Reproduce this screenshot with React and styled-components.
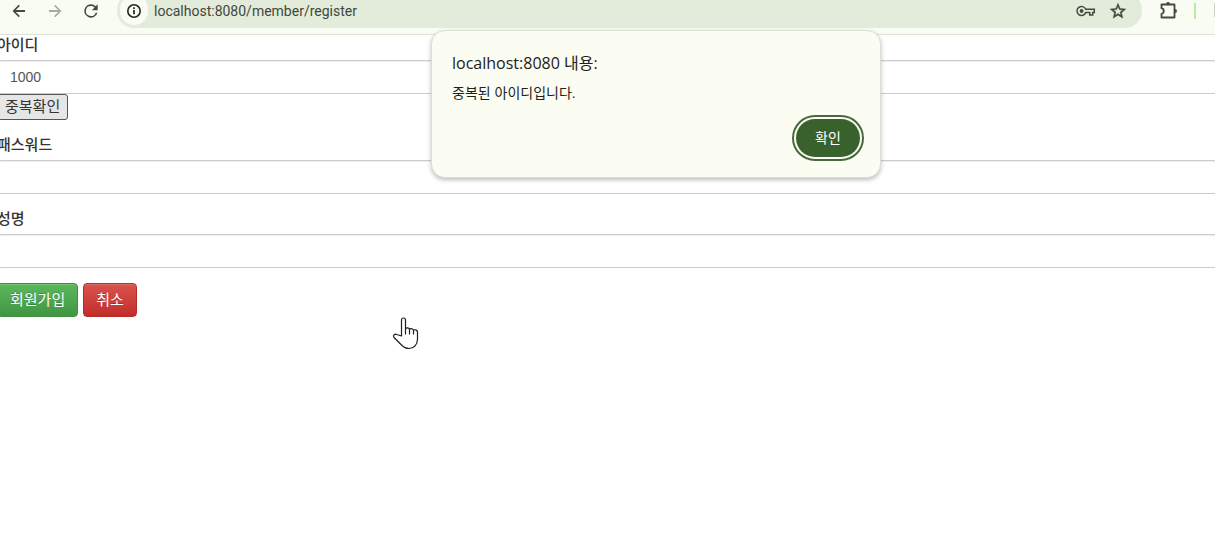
import React from 'react';
import styled, { createGlobalStyle, css } from 'styled-components';

const GlobalStyle = createGlobalStyle`
  * {
    box-sizing: border-box;
  }
  body {
    margin: 0;
    background: #fff;
    color: #333;
    font-family: "Liberation Sans", "Noto Sans CJK KR", sans-serif;
    font-size: 15px;
    line-height: 20px;
  }
`;

const Page = styled.div`
  position: relative;
  min-height: 100vh;
  overflow: hidden;
`;

const Toolbar = styled.header`
  display: flex;
  align-items: flex-start;
  height: 35px;
  padding-left: 8px;
  background: #f8fcf2;
  border-bottom: 1px solid #dde1d8;
`;

const IconButton = styled.button`
  display: flex;
  flex: none;
  align-items: center;
  justify-content: center;
  width: ${({ $width }) => $width || 36}px;
  height: 22px;
  padding: 0;
  border: 0;
  background: none;
  color: ${({ $muted }) => ($muted ? '#a7aca2' : '#42493f')};
`;

const AddressBar = styled.div`
  display: flex;
  flex: 1;
  align-items: flex-start;
  height: 28px;
  margin-left: 15px;
  padding: 0 8px 0 3px;
  background: #e3ecda;
  border-radius: 4px 4px 17px 17px / 11px 11px 17px 17px;
`;

const SiteInfo = styled.button`
  display: flex;
  align-items: center;
  justify-content: center;
  width: 28px;
  height: 25px;
  padding: 0 0 3px;
  border: 0;
  border-radius: 4px 4px 14px 14px / 11px 11px 14px 14px;
  background: #f8fcf2;
  color: #22271f;
`;

const Url = styled.input`
  flex: 1;
  min-width: 0;
  height: 22px;
  padding: 0 6px;
  border: 0;
  outline: 0;
  background: none;
  color: #41473c;
  font: 14px Roboto, "Noto Sans CJK KR", sans-serif;
`;

const Divider = styled.span`
  width: 2px;
  height: 16px;
  margin: 3px 18px 0 0;
  background: #bdeaa5;
`;

const Avatar = styled.span`
  width: 1px;
  height: 14px;
  margin-top: 3px;
  background: #cfd3ca;
`;

const Form = styled.form`
  margin: 0 -3px;
`;

const Group = styled.div`
  margin-bottom: 15px;
`;

const Label = styled.label`
  display: block;
  margin-bottom: 5px;
  font-weight: 500;
`;

const Field = styled.input`
  display: block;
  width: 100%;
  height: 34px;
  padding: 6px 12px;
  border: 1px solid #ccc;
  border-radius: 4px;
  outline: 0;
  background: #fff;
  box-shadow: inset 0 1px 1px rgba(0, 0, 0, 0.075);
  color: #555;
  font: inherit;
  font-size: 14px;
`;

const CheckButton = styled.button`
  display: block;
  height: 26px;
  padding: 0 7px;
  border: 1px solid #555;
  border-radius: 3px;
  background: #e6e6e6;
  color: #333;
  font: inherit;
`;

const Actions = styled.div`
  display: flex;
  gap: 5px;
`;

const tones = {
  success: css`
    border-color: #3e8f3e;
    background: linear-gradient(#5cb85c, #419641);
  `,
  danger: css`
    border-color: #b92c28;
    background: linear-gradient(#d9534f, #c12e2a);
  `,
};

const Button = styled.button`
  height: 34px;
  padding: 0 12px;
  border: 1px solid;
  border-radius: 4px;
  box-shadow: inset 0 1px 0 rgba(255, 255, 255, 0.15);
  color: #fff;
  font: inherit;
  text-shadow: 0 -1px 0 rgba(0, 0, 0, 0.2);
  ${({ $tone }) => tones[$tone]}
`;

const Dialog = styled.section`
  position: absolute;
  top: 30px;
  left: 431px;
  display: flex;
  flex-direction: column;
  width: 450px;
  padding: 20px;
  border: 1px solid #dcdfd4;
  border-radius: 14px;
  background: #fbfdf2;
  box-shadow: 0 2px 4px rgba(0, 0, 0, 0.25);
  color: #1d211a;
`;

const DialogTitle = styled.h1`
  margin: 0 0 8px;
  font: 16px/24px "Open Sans", "Noto Sans CJK KR", sans-serif;
`;

const DialogText = styled.p`
  margin: 0 0 16px;
  font-size: 14px;
  line-height: 20px;
`;

const Confirm = styled.button`
  align-self: flex-end;
  width: 64px;
  height: 38px;
  padding: 0 0 2px;
  border: 0;
  border-radius: 19px;
  outline: 2px solid #48693f;
  outline-offset: 2px;
  background: #38612b;
  color: #fff;
  font: 14px "Noto Sans CJK KR", sans-serif;
`;

const Pointer = styled.svg`
  position: absolute;
  top: 316px;
  left: 392px;
`;

const Icon = ({ size = 20, children }) => (
  <svg width={size} height={size} viewBox="0 0 24 24" fill="currentColor" aria-hidden="true">
    {children}
  </svg>
);

const App = () => (
  <Page>
    <GlobalStyle />
    <Toolbar>
      <IconButton $width={22} aria-label="뒤로">
        <Icon size={18}><path d="M20 10.800H7.700l5.500-5.500L11.600 3.700 3.400 12l8.200 8.300 1.600-1.600-5.500-5.500H20z" /></Icon>
      </IconButton>
      <IconButton $width={50} $muted aria-label="앞으로">
        <Icon size={18}><path d="M4 10.800h12.300l-5.500-5.500 1.600-1.600 8.200 8.300-8.200 8.300-1.600-1.600 5.500-5.500H4z" /></Icon>
      </IconButton>
      <IconButton $width={22} aria-label="새로고침">
        <Icon><path d="M17.650 6.350A8 8 0 1 0 19.730 14h-2.180A6 6 0 1 1 12 6c1.660 0 3.140.690 4.220 1.780L13 11h7V4z" /></Icon>
      </IconButton>
      <AddressBar>
        <SiteInfo aria-label="사이트 정보">
          <Icon size={16}>
            <path d="M12 1.500a10.500 10.500 0 1 0 0 21 10.500 10.500 0 0 0 0-21zm0 18.600a8.100 8.100 0 1 1 0-16.200 8.100 8.100 0 0 1 0 16.200zM10.700 10.500h2.600V17h-2.600zM10.700 6.500h2.600V9h-2.600z" />
          </Icon>
        </SiteInfo>
        <Url aria-label="주소" defaultValue="localhost:8080/member/register" />
        <IconButton $width={32} aria-label="비밀번호">
          <svg width="20" height="14" viewBox="0 0 20 14" fill="none" stroke="currentColor" strokeWidth="1.500" aria-hidden="true">
            <path d="M9.700 5.300H18.300V8.600H16.700V11H13.700V8.600H9.700A4.500 4.500 0 1 1 9.700 5.300z" />
            <circle cx="5.600" cy="7" r="1.900" fill="currentColor" stroke="none" />
          </svg>
        </IconButton>
        <IconButton $width={32} aria-label="북마크">
          <Icon size={18}>
            <path d="M22.500 9.240l-7.500-.650L12 1.500 9 8.600l-7.500.630 5.700 4.940L5.500 21.500l6.500-3.890 6.500 3.890-1.710-7.330zM12 15.400l-3.760 2.270 1-4.280-3.320-2.880 4.380-.380L12 6.100l1.710 4.040 4.380.380-3.320 2.880 1 4.280z" stroke="currentColor" strokeWidth="0.500" />
          </Icon>
        </IconButton>
      </AddressBar>
      <IconButton $width={52} aria-label="확장 프로그램">
        <svg width="20" height="20" viewBox="0 0 20 20" fill="none" stroke="currentColor" strokeWidth="1.800" strokeLinejoin="round" aria-hidden="true">
          <path d="M3.500 3.500H16.500V16.500H3.500V13C6.500 12.500 6.500 7.700 3.500 7.200z" />
          <path d="M8 3a2 2 0 0 1 4 0zM17 8a2 2 0 0 1 0 4z" fill="currentColor" stroke="none" />
        </svg>
      </IconButton>
      <Divider />
      <Avatar />
    </Toolbar>

    <Form onSubmit={(e) => e.preventDefault()}>
      <Group>
        <Label htmlFor="userid">아이디</Label>
        <Field id="userid" defaultValue="1000" />
        <CheckButton type="button">중복확인</CheckButton>
      </Group>
      <Group>
        <Label htmlFor="password">패스워드</Label>
        <Field id="password" type="password" />
      </Group>
      <Group>
        <Label htmlFor="username">성명</Label>
        <Field id="username" />
      </Group>
      <Actions>
        <Button $tone="success" type="submit">회원가입</Button>
        <Button $tone="danger" type="button">취소</Button>
      </Actions>
    </Form>

    <Dialog role="alertdialog" aria-labelledby="dialog-title">
      <DialogTitle id="dialog-title">localhost:8080 내용:</DialogTitle>
      <DialogText>중복된 아이디입니다.</DialogText>
      <Confirm type="button">확인</Confirm>
    </Dialog>

    <Pointer width="28" height="34" viewBox="0 0 28 34" fill="#fff" stroke="#1c1c24" strokeWidth="1.200" strokeLinejoin="round" strokeLinecap="round" aria-hidden="true">
      <path d="M9.500 20V4a2 2 0 0 1 4 0v8.500c1-1 3.300-.700 4 .600 1.300-.700 3.200-.400 4 .900 1.800-.700 4 .200 4 2.300V23c0 5.500-3.500 9.500-8.500 9.500-3.500 0-5.500-1.300-7.500-3.500L2 21.500c-1.500-2 .500-4 2.800-3z" />
      <path d="M13.500 12.500V18M17.500 13.100V18M21.500 14v4" fill="none" />
    </Pointer>
  </Page>
);

export default App;
